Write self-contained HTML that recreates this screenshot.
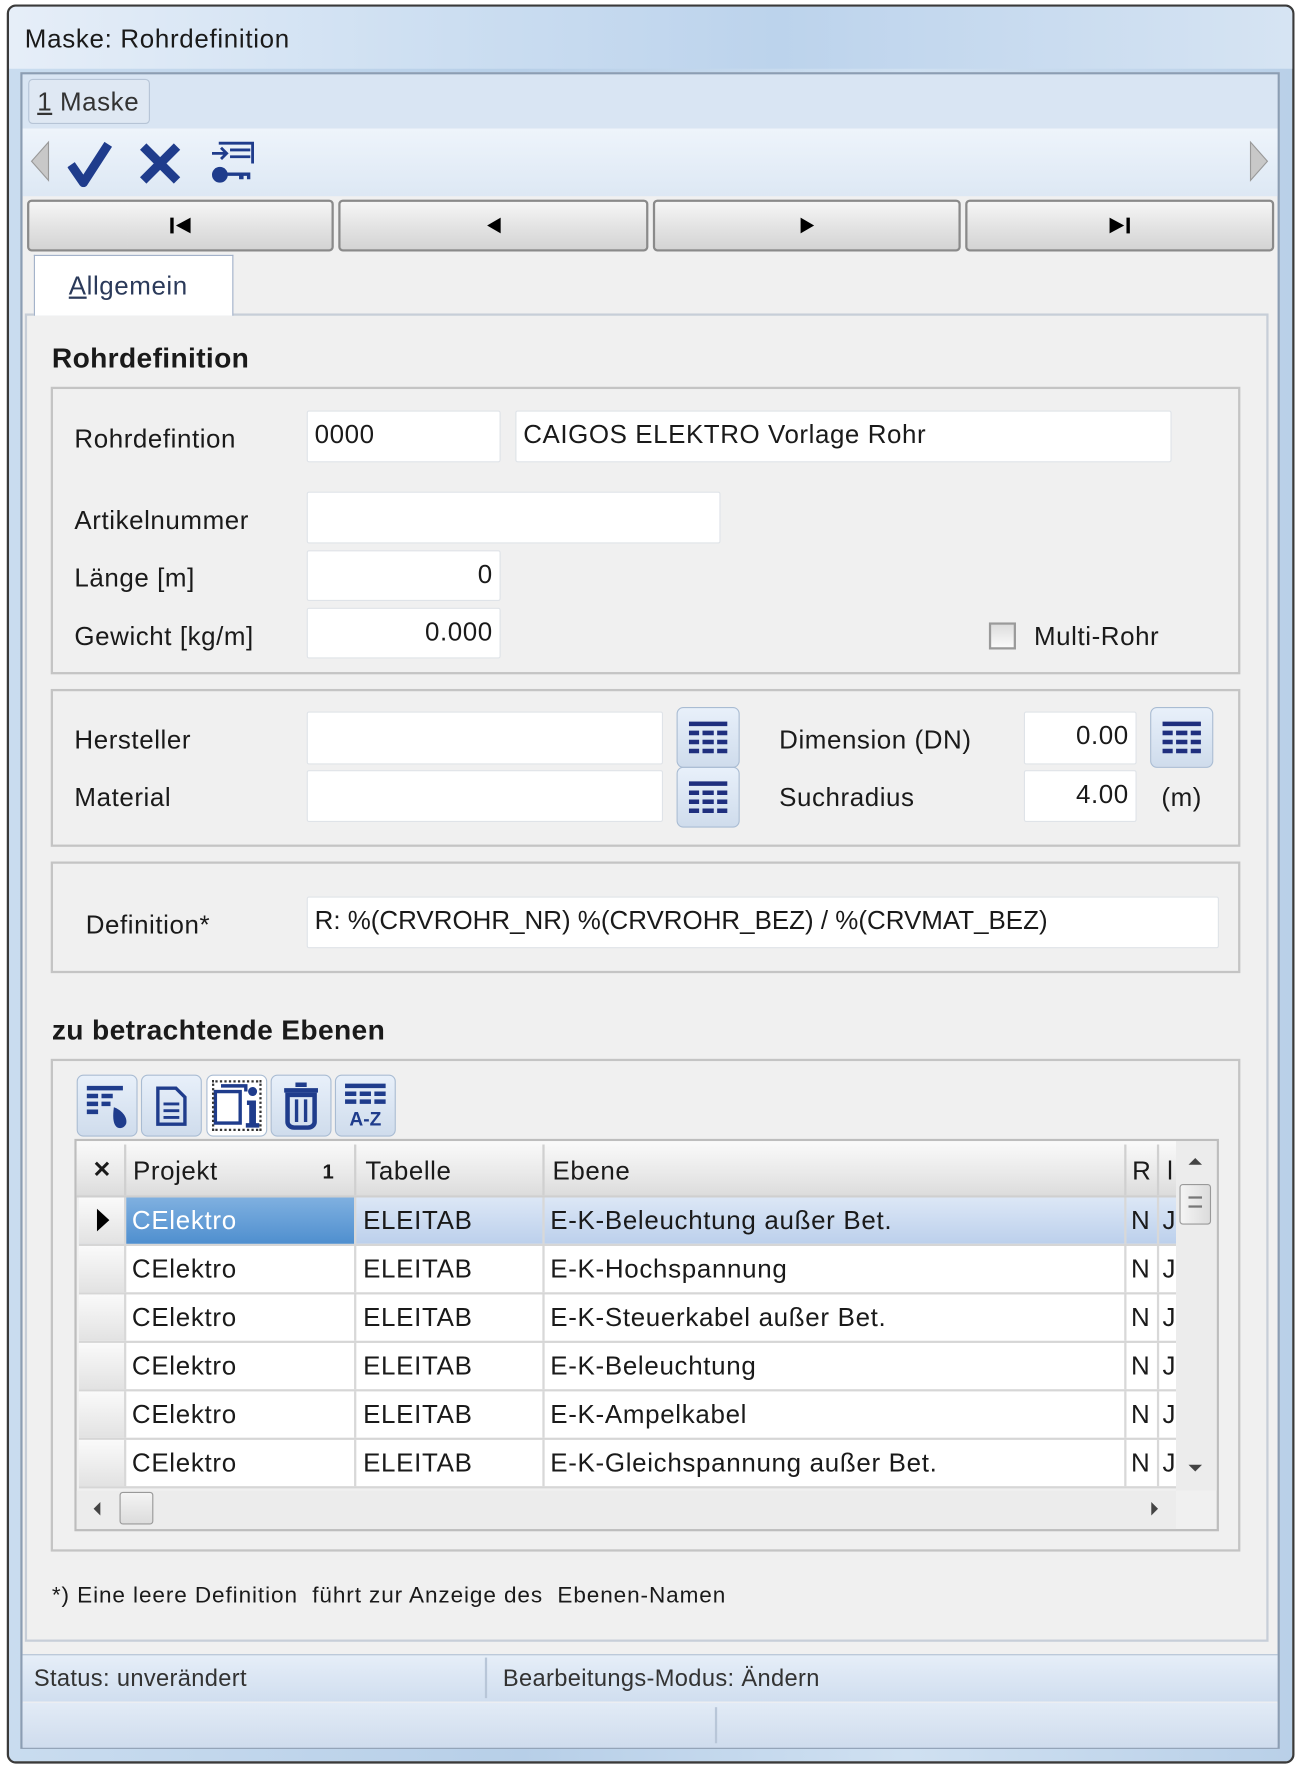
<!DOCTYPE html>
<html><head><meta charset="utf-8"><style>
*{box-sizing:border-box;margin:0;padding:0}
html,body{width:1299px;height:1766px;overflow:hidden;background:#fff}
#w{position:absolute;left:0;top:0;width:1152px;height:1566px;transform:scale(1.12760);transform-origin:0 0;font-family:"Liberation Sans",sans-serif;color:#1a1a1a}
.a{position:absolute}
.t{position:absolute;font-size:23px;letter-spacing:.5px;white-space:nowrap;line-height:1}
.in{position:absolute;background:#fff;border:1px solid #dfe3e8;border-radius:2px;font-size:23px;letter-spacing:.5px;padding:9px 6px 0;line-height:1;white-space:nowrap}
.r{text-align:right}
.grp{position:absolute;border:2px solid #c4c4c4;background:#f0f0f0}
.nb{position:absolute;top:177px;height:46px;border:2px solid #8a8a8a;border-radius:4px;background:linear-gradient(#f6f6f6,#e4e4e4 50%,#d4d4d4);display:flex;align-items:center;justify-content:center}
.lb{position:absolute;width:56px;height:54px;border:1px solid #a9bcd3;border-radius:6px;background:linear-gradient(#e8f0fa,#cfdcec);display:flex;align-items:center;justify-content:center}
.tb{position:absolute;top:953px;width:54px;height:55px;border:1px solid #a9bcd3;border-radius:6px;background:linear-gradient(#e8f0fa,#cfdcec);display:flex;align-items:center;justify-content:center}
.row{position:absolute;left:70px;width:973px;height:43px;border-bottom:2px solid #d6d6d6;background:#fff}
.c{position:absolute;top:0;height:41px;font-size:23px;letter-spacing:.6px;line-height:41px;white-space:nowrap;overflow:hidden;border-right:2px solid #d8d8d8}
</style></head><body><div id="w">
<div class="a" style="left:6px;top:4px;width:1142px;height:1560px;border:2px solid #3a3a3a;border-radius:8px;background:linear-gradient(90deg,#c9dcef,#b7cfe8 40%,#cfe0f1 70%,#b9d0e8)"></div>
<div class="a" style="left:8px;top:6px;width:1138px;height:55px;background:linear-gradient(90deg,#e6eef8 0%,#cfe0f2 30%,#bcd3ec 60%,#d6e4f3 100%);border-radius:6px 6px 0 0"></div>
<div class="t" style="left:22px;top:23px;font-size:23px;letter-spacing:.6px">Maske: Rohrdefinition</div>
<div class="a" style="left:18px;top:64px;width:1117px;height:1487px;border:2px solid #8b9db3;background:#f0f0f0"></div>
<div class="a" style="left:20px;top:66px;width:1113px;height:48px;background:#d9e5f3"></div>
<div class="a" style="left:25px;top:70px;width:108px;height:40px;border:1px solid #b6c4d6;border-radius:4px;background:#dfe8f3"></div>
<div class="t" style="left:33px;top:79px;font-size:23px;color:#333"><u>1</u> Maske</div>
<div class="a" style="left:20px;top:114px;width:1113px;height:60px;background:linear-gradient(#eef4fb,#dde8f4)"></div>
<svg class="a" style="left:24px;top:122px" width="22" height="42"><path d="M19 4 L4 21 L19 38Z" fill="#c8c8c8" stroke="#999"/></svg>
<svg class="a" style="left:1106px;top:122px" width="22" height="42"><path d="M3 4 L18 21 L3 38Z" fill="#c8c8c8" stroke="#999"/></svg>
<svg class="a" style="left:60px;top:124px" width="40" height="42"><path d="M3 22 L14 38 L36 4" fill="none" stroke="#1f3c8c" stroke-width="8" stroke-linejoin="round"/></svg>
<svg class="a" style="left:122px;top:126px" width="40" height="38"><path d="M5 4 L35 34 M35 4 L5 34" stroke="#1f3c8c" stroke-width="8"/></svg>
<svg class="a" style="left:184px;top:124px" width="44" height="42"><path d="M10 3h30v18M20 9h18M20 15h18M4 12h12M12 7l5 5-5 5" fill="none" stroke="#1f3c8c" stroke-width="2.5"/><circle cx="11" cy="31" r="7" fill="#1f3c8c"/><path d="M16 29h22v6h-3v-3h-3v3h-4v-3h-12z" fill="#1f3c8c"/></svg>
<div class="nb" style="left:24px;width:272px"><svg width="22" height="16"><rect x="2" y="1" width="3" height="14"/><path d="M20 1 L7 8 L20 15Z"/></svg></div>
<div class="nb" style="left:300px;width:275px"><svg width="16" height="16"><path d="M14 1 L2 8 L14 15Z"/></svg></div>
<div class="nb" style="left:579px;width:273px"><svg width="16" height="16"><path d="M2 1 L14 8 L2 15Z"/></svg></div>
<div class="nb" style="left:856px;width:274px"><svg width="22" height="16"><path d="M2 1 L15 8 L2 15Z"/><rect x="17" y="1" width="3" height="14"/></svg></div>
<div class="a" style="left:22px;top:278px;width:1103px;height:1178px;border:2px solid #c7ced8;background:#f0f0f0"></div>
<div class="a" style="left:30px;top:226px;width:177px;height:54px;border:1px solid #a0b0c8;border-bottom:none;background:#fff"></div>
<div class="t" style="left:61px;top:242px;font-size:23px;color:#2b3a5a"><u>A</u>llgemein</div>
<div class="t" style="left:46px;top:306px;font-size:25px;font-weight:bold;letter-spacing:.3px">Rohrdefinition</div>
<div class="grp" style="left:45px;top:343px;width:1055px;height:255px"></div>
<div class="t" style="left:66px;top:378px">Rohrdefintion</div>
<div class="in" style="left:272px;top:364px;width:172px;height:46px">0000</div>
<div class="in" style="left:457px;top:364px;width:582px;height:46px">CAIGOS ELEKTRO Vorlage Rohr</div>
<div class="t" style="left:66px;top:450px">Artikelnummer</div>
<div class="in" style="left:272px;top:436px;width:367px;height:46px"></div>
<div class="t" style="left:66px;top:501px">Länge [m]</div>
<div class="in r" style="left:272px;top:488px;width:172px;height:45px">0</div>
<div class="t" style="left:66px;top:553px">Gewicht [kg/m]</div>
<div class="in r" style="left:272px;top:539px;width:172px;height:45px">0.000</div>
<div class="a" style="left:877px;top:552px;width:24px;height:24px;border:2px solid #9a9a9a;background:linear-gradient(#ddd,#fafafa)"></div>
<div class="t" style="left:917px;top:553px">Multi-Rohr</div>
<div class="grp" style="left:45px;top:611px;width:1055px;height:140px"></div>
<div class="t" style="left:66px;top:645px">Hersteller</div>
<div class="t" style="left:66px;top:696px">Material</div>
<div class="in" style="left:272px;top:631px;width:316px;height:47px"></div>
<div class="in" style="left:272px;top:683px;width:316px;height:46px"></div>
<div class="lb" style="left:600px;top:627px"><svg width="36" height="30"><path d="M1 3h34M1 11h9M13 11h10M26 11h9M1 19h9M13 19h10M26 19h9M1 27h9M13 27h10M26 27h9" stroke="#1f2f7e" stroke-width="4"/></svg></div>
<div class="lb" style="left:600px;top:680px"><svg width="36" height="30"><path d="M1 3h34M1 11h9M13 11h10M26 11h9M1 19h9M13 19h10M26 19h9M1 27h9M13 27h10M26 27h9" stroke="#1f2f7e" stroke-width="4"/></svg></div>
<div class="t" style="left:691px;top:645px">Dimension (DN)</div>
<div class="t" style="left:691px;top:696px">Suchradius</div>
<div class="in r" style="left:908px;top:631px;width:100px;height:47px">0.00</div>
<div class="in r" style="left:908px;top:683px;width:100px;height:46px">4.00</div>
<div class="lb" style="left:1020px;top:627px"><svg width="36" height="30"><path d="M1 3h34M1 11h9M13 11h10M26 11h9M1 19h9M13 19h10M26 19h9M1 27h9M13 27h10M26 27h9" stroke="#1f2f7e" stroke-width="4"/></svg></div>
<div class="t" style="left:1030px;top:696px">(m)</div>
<div class="grp" style="left:45px;top:764px;width:1055px;height:99px"></div>
<div class="t" style="left:76px;top:809px">Definition*</div>
<div class="in" style="left:272px;top:795px;width:809px;height:46px;letter-spacing:0">R: %(CRVROHR_NR) %(CRVROHR_BEZ) / %(CRVMAT_BEZ)</div>
<div class="t" style="left:46px;top:902px;font-size:25px;font-weight:bold;letter-spacing:.3px">zu betrachtende Ebenen</div>
<div class="grp" style="left:45px;top:939px;width:1055px;height:437px"></div>
<div class="tb" style="left:68px"><svg width="42" height="42"><path d="M3 5h32M3 12h10M16 12h10M3 19h10M16 19h8M3 26h10" stroke="#1f3c8c" stroke-width="4"/><path d="M27 22c6 2 12 8 11 14-1 4-6 6-9 3-3-3-3-10-2-17z" fill="#1f3c8c"/></svg></div>
<div class="tb" style="left:125px"><svg width="30" height="36"><path d="M3 2h16l8 8v24H3z" fill="none" stroke="#1f3c8c" stroke-width="3"/><path d="M8 16h14M8 22h14M8 28h14" stroke="#1f3c8c" stroke-width="2.5"/></svg></div>
<div class="tb" style="left:183px;background:#fff"><div class="a" style="left:4px;top:4px;right:4px;bottom:4px;border:2px dotted #333"></div><svg width="44" height="42"><path d="M3 8h22v28H3zM8 3h22v5" fill="none" stroke="#1f3c8c" stroke-width="3"/><circle cx="36" cy="8" r="4" fill="#1f3c8c"/><path d="M31 16h8v20h3v4H30v-4h3V20h-2z" fill="#1f3c8c"/></svg></div>
<div class="tb" style="left:240px"><svg width="34" height="42"><path d="M2 7h30M12 2h10" stroke="#1f3c8c" stroke-width="4"/><path d="M5 11h24v24c0 3-3 5-6 5H11c-3 0-6-2-6-5z" fill="none" stroke="#1f3c8c" stroke-width="4"/><path d="M13 15v20M21 15v20" stroke="#1f3c8c" stroke-width="3"/></svg></div>
<div class="tb" style="left:297px"><div style="text-align:center;line-height:1"><svg width="38" height="22"><path d="M1 3h36M1 10h10M14 10h10M27 10h10M1 17h10M14 17h10M27 17h10" stroke="#1f3c8c" stroke-width="4"/></svg><div style="font-weight:bold;color:#1f3c8c;font-size:17px;margin-top:-2px">A-Z</div></div></div>
<div class="a" style="left:66px;top:1010px;width:1015px;height:348px;border:2px solid #bdbdbd;background:#f0f0f0"></div>
<div class="a" style="left:68px;top:1012px;width:975px;height:50px;background:linear-gradient(#fafafa,#e9e9e9 60%,#dcdcdc);border-bottom:2px solid #cfcfcf"></div>
<div class="t" style="left:82px;top:1028px;font-weight:bold;font-size:20px">✕</div>
<div class="a" style="left:110px;top:1015px;width:2px;height:45px;background:#d0d0d0"></div>
<div class="t" style="left:118px;top:1027px;font-size:23px">Projekt</div>
<div class="t" style="left:286px;top:1030px;font-size:18px;font-weight:bold">1</div>
<div class="a" style="left:314px;top:1015px;width:2px;height:45px;background:#d0d0d0"></div>
<div class="t" style="left:324px;top:1027px;font-size:23px">Tabelle</div>
<div class="a" style="left:481px;top:1015px;width:2px;height:45px;background:#d0d0d0"></div>
<div class="t" style="left:490px;top:1027px;font-size:23px">Ebene</div>
<div class="a" style="left:997px;top:1015px;width:2px;height:45px;background:#d0d0d0"></div>
<div class="t" style="left:1004px;top:1027px;font-size:23px">R</div>
<div class="a" style="left:1026px;top:1015px;width:2px;height:45px;background:#d0d0d0"></div>
<div class="t" style="left:1035px;top:1027px;font-size:23px">l</div>
<div class="row" style="top:1062px;background:linear-gradient(#dce7f6,#bcd0ec)"><div class="c" style="left:0;width:42px;background:linear-gradient(#fafafa,#e2e2e2)"><svg width="40" height="41"><path d="M16 10 L27 20 L16 30Z" fill="#000"/></svg></div><div class="c" style="left:42px;width:204px;padding-left:5px;color:#fff;background:linear-gradient(#7fb0e0,#4f8fcf)">CElektro</div><div class="c" style="left:246px;width:167px;padding-left:6px">ELEITAB</div><div class="c" style="left:413px;width:516px;padding-left:5px">E-K-Beleuchtung außer Bet.</div><div class="c" style="left:929px;width:29px;padding-left:4px">N</div><div class="c" style="left:958px;width:15px;padding-left:3px;border:none">J</div></div>
<div class="row" style="top:1105px"><div class="c" style="left:0;width:42px;background:linear-gradient(#fafafa,#e2e2e2)"></div><div class="c" style="left:42px;width:204px;padding-left:5px">CElektro</div><div class="c" style="left:246px;width:167px;padding-left:6px">ELEITAB</div><div class="c" style="left:413px;width:516px;padding-left:5px">E-K-Hochspannung</div><div class="c" style="left:929px;width:29px;padding-left:4px">N</div><div class="c" style="left:958px;width:15px;padding-left:3px;border:none">J</div></div>
<div class="row" style="top:1148px"><div class="c" style="left:0;width:42px;background:linear-gradient(#fafafa,#e2e2e2)"></div><div class="c" style="left:42px;width:204px;padding-left:5px">CElektro</div><div class="c" style="left:246px;width:167px;padding-left:6px">ELEITAB</div><div class="c" style="left:413px;width:516px;padding-left:5px">E-K-Steuerkabel außer Bet.</div><div class="c" style="left:929px;width:29px;padding-left:4px">N</div><div class="c" style="left:958px;width:15px;padding-left:3px;border:none">J</div></div>
<div class="row" style="top:1191px"><div class="c" style="left:0;width:42px;background:linear-gradient(#fafafa,#e2e2e2)"></div><div class="c" style="left:42px;width:204px;padding-left:5px">CElektro</div><div class="c" style="left:246px;width:167px;padding-left:6px">ELEITAB</div><div class="c" style="left:413px;width:516px;padding-left:5px">E-K-Beleuchtung</div><div class="c" style="left:929px;width:29px;padding-left:4px">N</div><div class="c" style="left:958px;width:15px;padding-left:3px;border:none">J</div></div>
<div class="row" style="top:1234px"><div class="c" style="left:0;width:42px;background:linear-gradient(#fafafa,#e2e2e2)"></div><div class="c" style="left:42px;width:204px;padding-left:5px">CElektro</div><div class="c" style="left:246px;width:167px;padding-left:6px">ELEITAB</div><div class="c" style="left:413px;width:516px;padding-left:5px">E-K-Ampelkabel</div><div class="c" style="left:929px;width:29px;padding-left:4px">N</div><div class="c" style="left:958px;width:15px;padding-left:3px;border:none">J</div></div>
<div class="row" style="top:1277px"><div class="c" style="left:0;width:42px;background:linear-gradient(#fafafa,#e2e2e2)"></div><div class="c" style="left:42px;width:204px;padding-left:5px">CElektro</div><div class="c" style="left:246px;width:167px;padding-left:6px">ELEITAB</div><div class="c" style="left:413px;width:516px;padding-left:5px">E-K-Gleichspannung außer Bet.</div><div class="c" style="left:929px;width:29px;padding-left:4px">N</div><div class="c" style="left:958px;width:15px;padding-left:3px;border:none">J</div></div>
<div class="a" style="left:1043px;top:1012px;width:36px;height:310px;background:#ececec"></div>
<svg class="a" style="left:1052px;top:1024px" width="16" height="12"><path d="M2 9 L8 3 L14 9Z" fill="#444"/></svg>
<svg class="a" style="left:1052px;top:1296px" width="16" height="12"><path d="M2 3 L8 9 L14 3Z" fill="#444"/></svg>
<div class="a" style="left:1046px;top:1050px;width:28px;height:36px;border:1px solid #999;border-radius:3px;background:linear-gradient(90deg,#f4f4f4,#dcdcdc)"></div>
<div class="a" style="left:1054px;top:1061px;width:12px;height:10px;border-top:2px solid #777;border-bottom:2px solid #777"></div>
<div class="a" style="left:68px;top:1322px;width:975px;height:34px;background:#ececec"></div>
<svg class="a" style="left:80px;top:1330px" width="12" height="16"><path d="M9 2 L3 8 L9 14Z" fill="#444"/></svg>
<svg class="a" style="left:1018px;top:1330px" width="12" height="16"><path d="M3 2 L9 8 L3 14Z" fill="#444"/></svg>
<div class="a" style="left:106px;top:1323px;width:30px;height:29px;border:1px solid #999;border-radius:3px;background:linear-gradient(#f4f4f4,#dcdcdc)"></div>
<div class="t" style="left:46px;top:1405px;font-size:20px;letter-spacing:.8px">*) Eine leere Definition&nbsp; führt zur Anzeige des&nbsp; Ebenen-Namen</div>
<div class="a" style="left:20px;top:1467px;width:1113px;height:42px;background:linear-gradient(#e6eef8,#d0deef);border-top:1px solid #b0c0d4"></div>
<div class="t" style="left:30px;top:1478px;font-size:21px;color:#333;letter-spacing:.3px">Status: unverändert</div>
<div class="a" style="left:430px;top:1470px;width:2px;height:36px;background:#b8c6d8"></div>
<div class="t" style="left:446px;top:1478px;font-size:21px;color:#333;letter-spacing:.3px">Bearbeitungs-Modus: Ändern</div>
<div class="a" style="left:20px;top:1510px;width:1113px;height:40px;background:linear-gradient(#e2ebf6,#cfdced)"></div>
<div class="a" style="left:634px;top:1514px;width:2px;height:32px;background:#b8c6d8"></div>
</div></body></html>
